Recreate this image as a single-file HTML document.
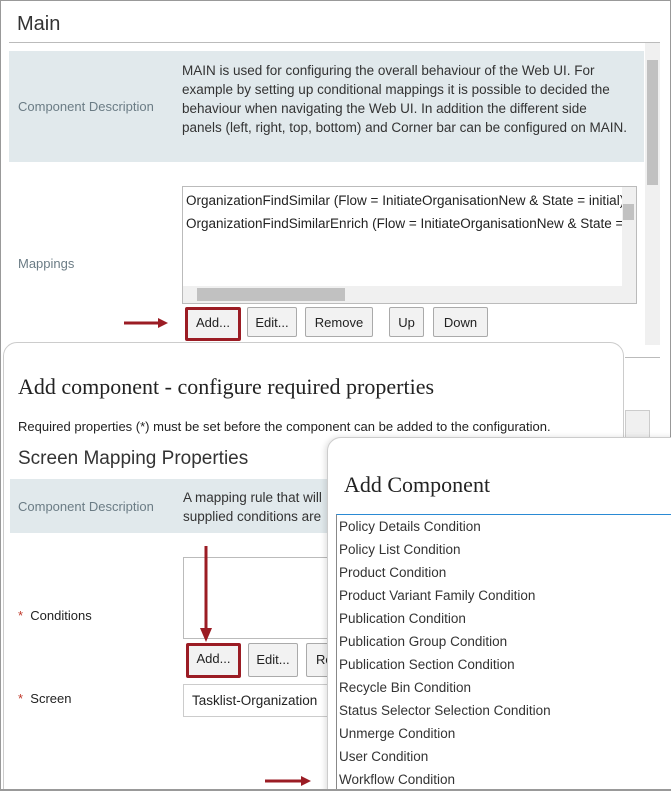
<!DOCTYPE html>
<html style="overflow:hidden;height:791px"><head><style>
body{margin:0;width:671px;height:791px;overflow:hidden;background:#fff;font-family:"Liberation Sans",sans-serif;position:relative}
.a{position:absolute}
.t{font-size:13px;color:#222;white-space:nowrap}
.lbl{font-size:13px;color:#6b7c85;white-space:nowrap}
.btn{position:absolute;height:30px;border:1px solid #aaa;background:#f2f2f2;border-radius:2px;font-size:13px;color:#222;line-height:30px;text-align:center;box-sizing:border-box}
.red{border:3px solid #9b1c24;line-height:26px}
.serif{font-family:"Liberation Serif",serif;color:#222}
.li{position:absolute;left:339px;font-size:13.5px;color:#333;white-space:nowrap}
</style></head><body>
<div class="a" style="left:0;top:0;width:669px;height:789px;border:1px solid #999"></div>
<div class="a" style="left:17px;top:13px;font-size:20px;color:#333">Main</div>
<div class="a" style="left:9px;top:42px;width:651px;height:1px;background:#bbb"></div>
<div class="a" style="left:645px;top:43px;width:15px;height:302px;background:#f0f0f0"></div>
<div class="a" style="left:647px;top:60px;width:11px;height:125px;background:#c1c1c1"></div>
<div class="a" style="left:9px;top:51px;width:635px;height:111px;background:#e1e9ec"></div>
<div class="a lbl" style="left:18px;top:99px">Component Description</div>
<div class="a" style="left:182px;top:61px;width:448px;font-size:13.5px;line-height:19px;color:#333">MAIN is used for configuring the overall behaviour of the Web UI. For example by setting up conditional mappings it is possible to decided the behaviour when navigating the Web UI. In addition the different side panels (left, right, top, bottom) and Corner bar can be configured on MAIN.</div>
<div class="a lbl" style="left:18px;top:256px">Mappings</div>
<div class="a" style="left:182px;top:186px;width:453px;height:116px;border:1px solid #bbb;overflow:hidden">
 <div class="a t" style="left:3px;top:6px;font-size:13.5px">OrganizationFindSimilar (Flow = InitiateOrganisationNew &amp; State = initial)</div>
 <div class="a t" style="left:3px;top:29px;font-size:13.5px">OrganizationFindSimilarEnrich (Flow = InitiateOrganisationNew &amp; State = x)</div>
 <div class="a" style="left:439px;top:0;width:14px;height:116px;background:#f0f0f0"></div>
 <div class="a" style="left:440px;top:17px;width:11px;height:16px;background:#c1c1c1"></div>
 <div class="a" style="left:0;top:99px;width:453px;height:17px;background:#f0f0f0"></div>
 <div class="a" style="left:14px;top:101px;width:148px;height:13px;background:#c1c1c1"></div>
</div>
<svg class="a" style="left:122px;top:317px" width="48" height="12"><path d="M2 6H38" stroke="#9b1c24" stroke-width="3"/><path d="M36 1L46 6L36 11Z" fill="#9b1c24"/></svg>
<div class="btn red" style="left:185px;top:307px;width:56px;height:34px">Add...</div>
<div class="btn" style="left:247px;top:307px;width:50px">Edit...</div>
<div class="btn" style="left:305px;top:307px;width:68px">Remove</div>
<div class="btn" style="left:389px;top:307px;width:35px">Up</div>
<div class="btn" style="left:433px;top:307px;width:55px">Down</div>
<div class="a" style="left:625px;top:357px;width:35px;height:1px;background:#bbb"></div>
<div class="a" style="left:625px;top:410px;width:23px;height:30px;background:#f0f0f0;border:1px solid #ccc"></div>

<div class="a" style="left:3px;top:342px;width:619px;height:460px;background:#fff;border:1px solid #ccc;border-radius:14px 14px 0 0"></div>
<div class="a serif" style="left:18px;top:374px;font-size:22px">Add component - configure required properties</div>
<div class="a t" style="left:18px;top:419px">Required properties (*) must be set before the component can be added to the configuration.</div>
<div class="a" style="left:18px;top:448px;font-size:19px;color:#333">Screen Mapping Properties</div>
<div class="a" style="left:10px;top:479px;width:320px;height:54px;background:#e1e9ec"></div>
<div class="a lbl" style="left:18px;top:499px">Component Description</div>
<div class="a" style="left:183px;top:488px;font-size:13.5px;line-height:19px;color:#333;white-space:nowrap">A mapping rule that will<br>supplied conditions are</div>
<div class="a" style="left:183px;top:557px;width:150px;height:80px;border:1px solid #bbb"></div>
<div class="a t" style="left:18px;top:608px"><span style="color:#c0392b">*</span>&nbsp; Conditions</div>
<svg class="a" style="left:199px;top:546px" width="14" height="98"><path d="M7 0V84" stroke="#9b1c24" stroke-width="3"/><path d="M1 82L7 96L13 82Z" fill="#9b1c24"/></svg>
<div class="btn red" style="left:186px;top:643px;width:55px;height:35px">Add...</div>
<div class="btn" style="left:248px;top:643px;width:50px;height:34px;line-height:32px">Edit...</div>
<div class="btn" style="left:306px;top:643px;width:40px;height:34px;line-height:32px;text-align:left;padding-left:9px">Re</div>
<div class="a t" style="left:18px;top:691px"><span style="color:#c0392b">*</span>&nbsp; Screen</div>
<div class="a" style="left:183px;top:684px;width:160px;height:31px;border:1px solid #ccc"></div>
<div class="a t" style="left:192px;top:693px;font-size:13.5px">Tasklist-Organization</div>
<svg class="a" style="left:263px;top:775px" width="50" height="12"><path d="M2 6H40" stroke="#9b1c24" stroke-width="3"/><path d="M38 1L48 6L38 11Z" fill="#9b1c24"/></svg>

<div class="a" style="left:327px;top:437px;width:360px;height:360px;background:#fff;border:1px solid #ccc;border-radius:14px 0 0 0;box-shadow:-2px 0 6px rgba(0,0,0,.12)"></div>
<div class="a serif" style="left:344px;top:472px;font-size:22px">Add Component</div>
<div class="a" style="left:336px;top:514px;width:340px;height:290px;border:1px solid #888;border-top:1px solid #2a8ad4;border-right:none"></div>
<div class="li" style="top:519px">Policy Details Condition</div>
<div class="li" style="top:542px">Policy List Condition</div>
<div class="li" style="top:565px">Product Condition</div>
<div class="li" style="top:588px">Product Variant Family Condition</div>
<div class="li" style="top:611px">Publication Condition</div>
<div class="li" style="top:634px">Publication Group Condition</div>
<div class="li" style="top:657px">Publication Section Condition</div>
<div class="li" style="top:680px">Recycle Bin Condition</div>
<div class="li" style="top:703px">Status Selector Selection Condition</div>
<div class="li" style="top:726px">Unmerge Condition</div>
<div class="li" style="top:749px">User Condition</div>
<div class="li" style="top:772px">Workflow Condition</div>
<div class="a" style="left:0;top:789px;width:671px;height:2px;background:#999"></div>
</body></html>
